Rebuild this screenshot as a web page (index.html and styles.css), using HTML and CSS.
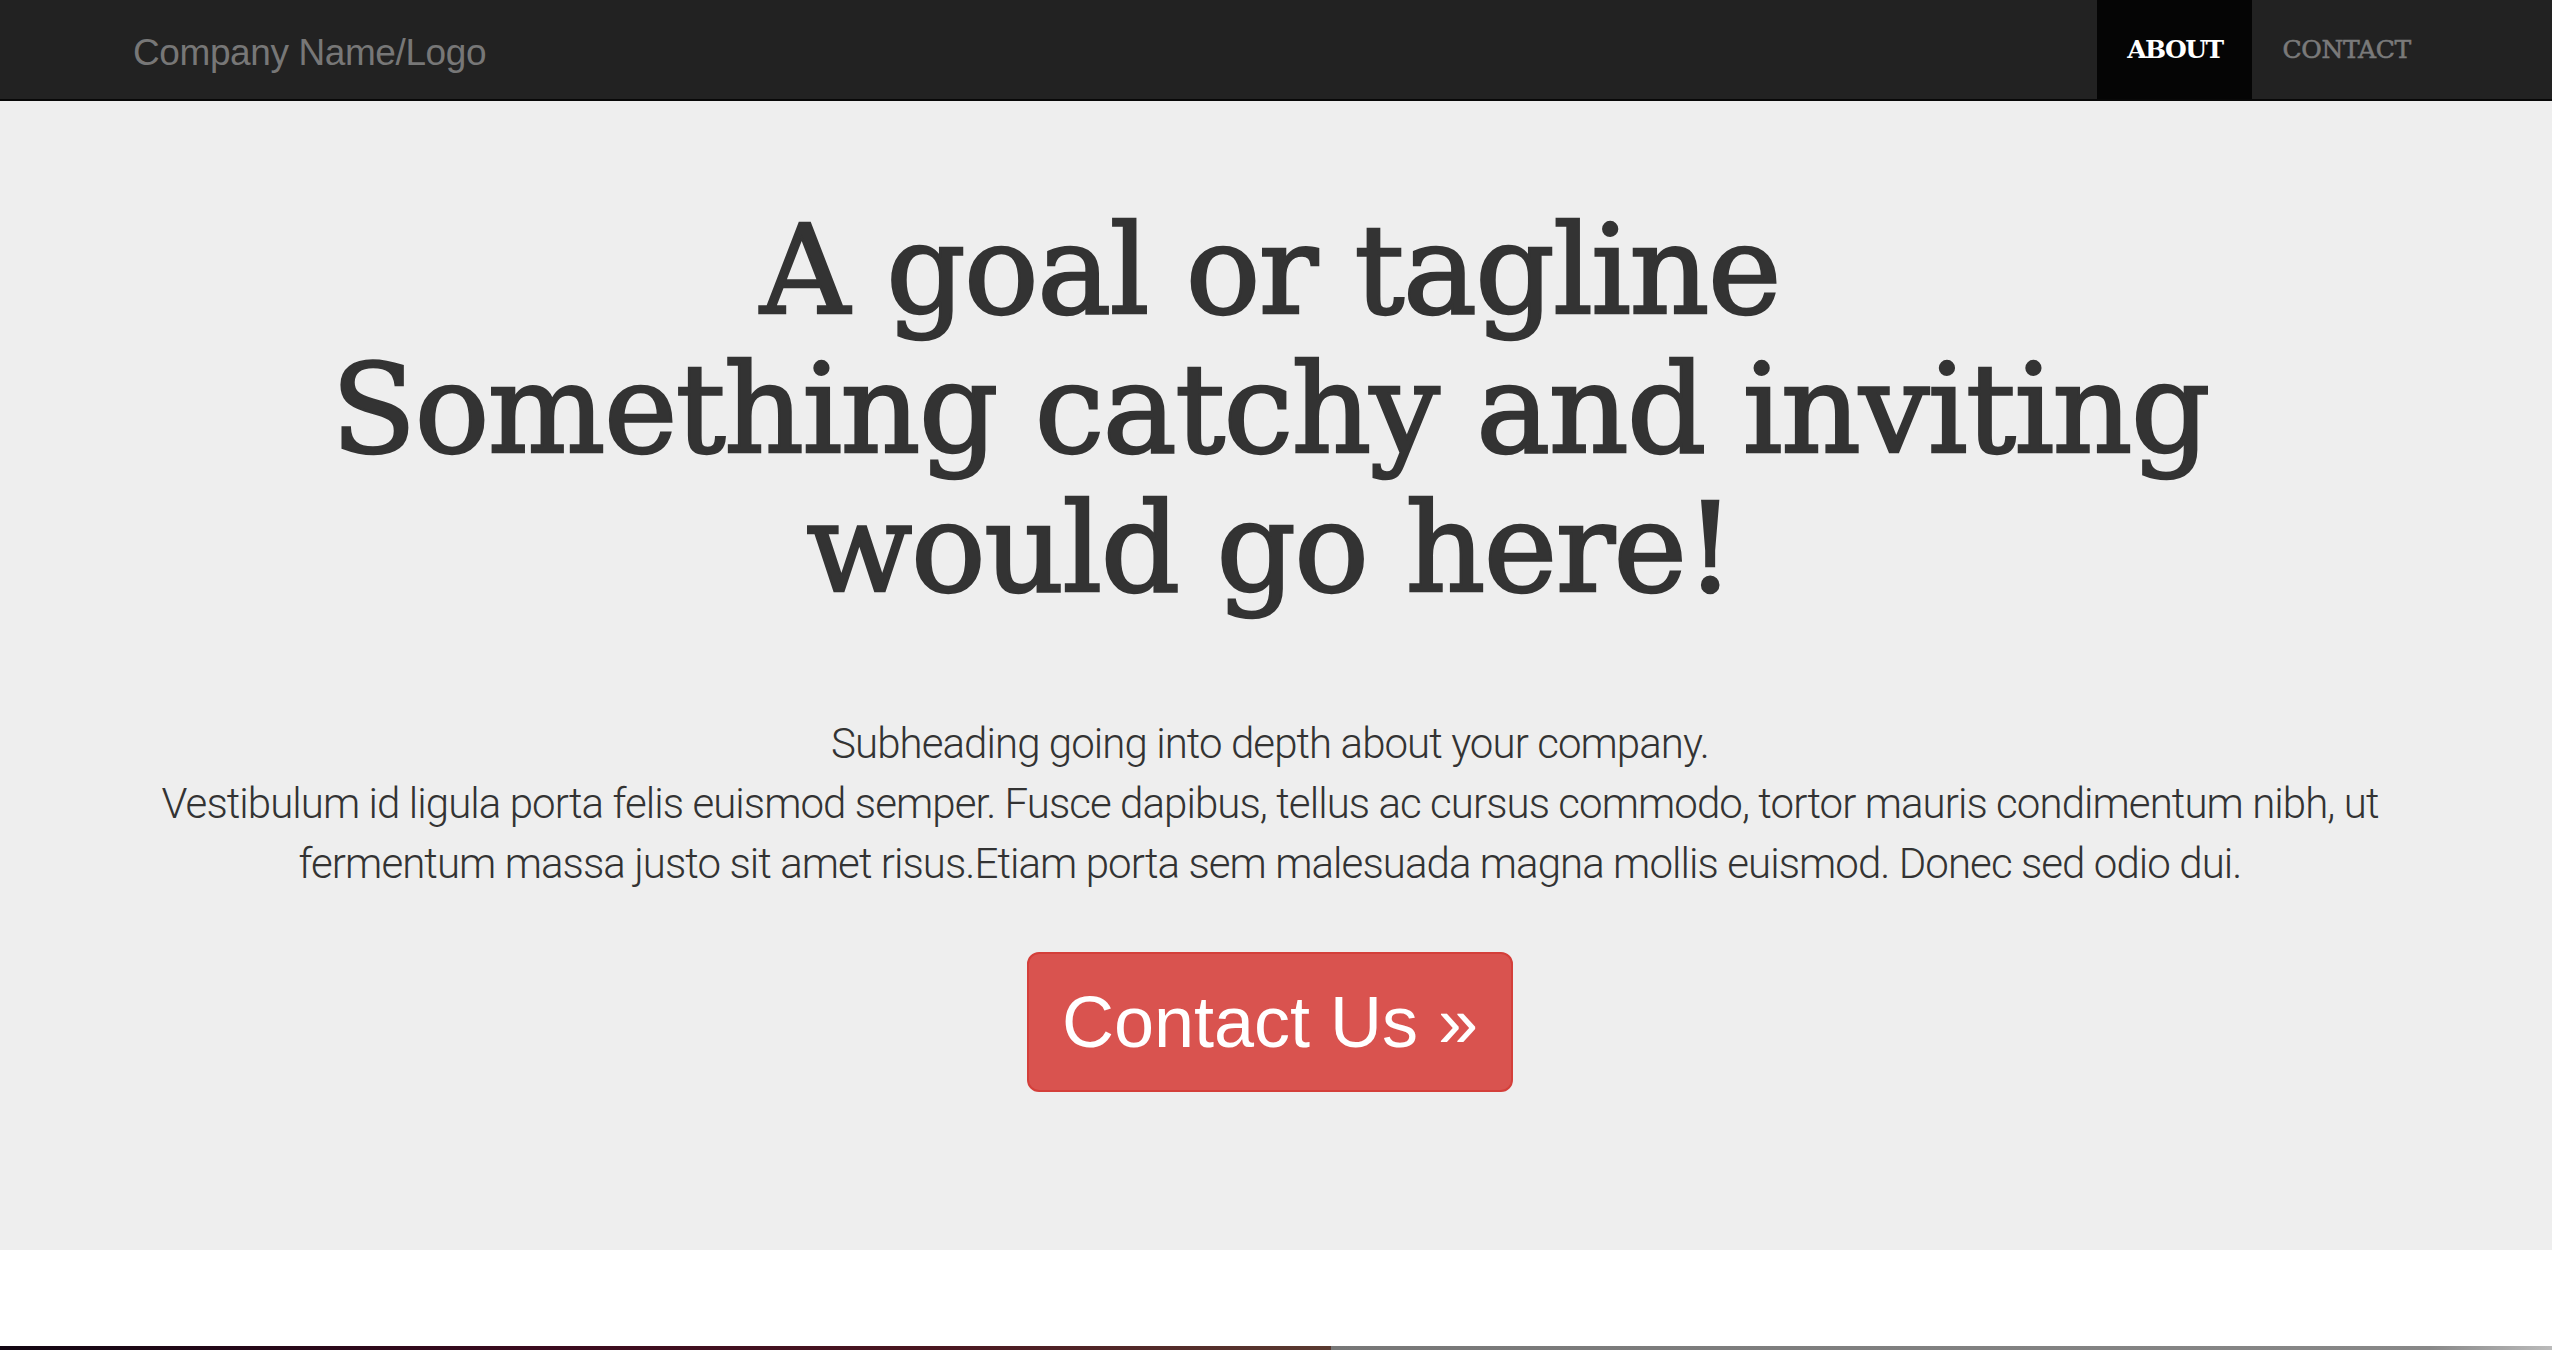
FILE: index.html
```html
<!DOCTYPE html>
<html lang="en">
<head>
<meta charset="utf-8">
<title>Company</title>
<link rel="stylesheet" href="styles.css">
</head>
<body>
<nav class="navbar">
  <div class="brand">Company Name/Logo</div>
  <ul class="nav">
    <li class="nav-item active">ABOUT</li>
    <li class="nav-item">CONTACT</li>
  </ul>
</nav>
<section class="jumbotron">
  <h1 class="tagline">A goal or tagline<br>Something catchy and inviting<br>would go here!</h1>
  <p class="lead">Subheading going into depth about your company.<br>Vestibulum id ligula porta felis euismod semper. Fusce dapibus, tellus ac cursus commodo, tortor mauris condimentum nibh, ut<br>fermentum massa justo sit amet risus.Etiam porta sem malesuada magna mollis euismod. Donec sed odio dui.</p>
  <a class="btn-danger" href="#">Contact Us &raquo;</a>
</section>
<div class="blank"></div>
<div class="desk"><div class="desk-left"></div><div class="desk-right"></div></div>
</body>
</html>
```
FILE: styles.css
```css
html, body {
  margin: 0;
  padding: 0;
  background: #fff;
}
body {
  font-family: "Liberation Sans", Arial, sans-serif;
}
.navbar {
  display: flex;
  align-items: stretch;
  justify-content: space-between;
  height: 99px;
  background: #222;
  border-bottom: 2px solid #080808;
  padding: 0 111px 0 133px;
}
.brand {
  font-family: "Liberation Sans", Arial, sans-serif;
  font-size: 37px;
  color: #777;
  line-height: 99px;
  padding-top: 3px;
  letter-spacing: -0.4px;
}
.nav {
  display: flex;
  list-style: none;
  margin: 0;
  padding: 0;
}
.nav-item {
  font-family: "DejaVu Serif", serif;
  font-size: 25px;
  color: #7a7a7a;
  line-height: 99px;
  padding: 0 30px;
  letter-spacing: -0.3px;
  -webkit-text-stroke: 0.6px #7a7a7a;
}
.nav-item.active {
  background: #050505;
  color: #fff;
  font-weight: bold;
  letter-spacing: -1.6px;
  -webkit-text-stroke: 0;
}
.jumbotron {
  background: #eee;
  display: flex;
  flex-direction: column;
  align-items: center;
  padding: 100px 12px 158px 0;
}
.tagline {
  font-family: "DejaVu Serif", serif;
  font-weight: normal;
  font-size: 124px;
  line-height: 139px;
  color: #333;
  text-align: center;
  margin: 0;
  letter-spacing: -1.5px;
  -webkit-text-stroke: 2.5px #333;
}
.lead {
  font-family: "Roboto", "Liberation Sans", sans-serif;
  font-weight: 300;
  font-size: 42px;
  line-height: 60px;
  color: #333;
  text-align: center;
  margin: 96px 0 0;
  letter-spacing: -0.93px;
}
.btn-danger {
  display: block;
  margin: 58px 0 0;
  width: 486px;
  height: 140px;
  box-sizing: border-box;
  background: #d9534f;
  border: 2px solid #d43f3a;
  border-radius: 12px;
  color: #fff;
  text-decoration: none;
  font-family: "Liberation Sans", Arial, sans-serif;
  font-size: 72px;
  line-height: 136px;
  text-align: center;
}
.blank {
  height: 96px;
  background: #fff;
}
.desk {
  display: flex;
  height: 6px;
}
.desk-left {
  width: 1331px;
  background: linear-gradient(90deg, #120612, #3a0a1e 40%, #4a1620 70%, #5a3a30);
}
.desk-right {
  flex: 1;
  background: linear-gradient(90deg, #777, #888 90%, #bbb);
}
```
